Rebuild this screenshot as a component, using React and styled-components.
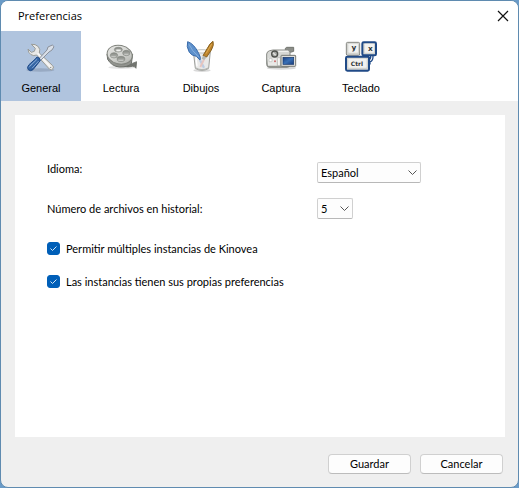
import { useState } from "react";
import styled, { createGlobalStyle } from "styled-components";

const GlobalStyle = createGlobalStyle`
  * {
    box-sizing: border-box;
  }

  body {
    margin: 0;
    background: #6a9bc8;
    color: #000000;
    font-family: Lato, "Liberation Sans", Arial, sans-serif;
    font-size: 11px;
    line-height: 14px;
  }
`;

const Desktop = styled.div`
  display: flex;
  min-height: 100vh;
`;

const Dialog = styled.form`
  display: flex;
  flex-direction: column;
  flex: 1;
  overflow: hidden;
  background: #efefef;
  border: 1px solid #5f8bb0;
  border-radius: 8px;
`;

const TitleBar = styled.header`
  display: flex;
  align-items: center;
  justify-content: space-between;
  height: 30px;
  padding: 0 7px 0 17px;
  background: #ffffff;
`;

const Title = styled.h1`
  margin: 0;
  font-family: "Open Sans", "Noto Sans", sans-serif;
  font-size: 11px;
  font-weight: normal;
`;

const CloseButton = styled.button`
  display: flex;
  padding: 2px;
  background: none;
  border: none;
`;

const Tabs = styled.nav`
  display: flex;
  background: #ffffff;
`;

const Tab = styled.button`
  display: flex;
  flex-direction: column;
  align-items: center;
  gap: 8px;
  width: 80px;
  height: 70px;
  padding: 10px 0 0;
  background: ${(props) => (props.$active ? "#b0c4de" : "#ffffff")};
  border: none;
  color: inherit;
  font-family: "Liberation Sans", Arial, sans-serif;
  font-size: 11px;
  line-height: 14px;
`;

const Icon = styled.svg`
  display: block;
  width: 32px;
  height: 32px;
`;

const Panel = styled.main`
  display: flex;
  flex-direction: column;
  flex: 1;
  margin: 14px 13px 0 14px;
  padding: 47px 32px;
  background: #ffffff;
`;

const Fields = styled.div`
  display: flex;
  flex-direction: column;
  gap: 15px;
  margin-bottom: 13px;
`;

const Field = styled.div`
  display: grid;
  grid-template-columns: 270px 1fr;
  align-items: ${(props) => props.$align || "center"};
`;

const SelectBox = styled.div`
  position: relative;
  width: ${(props) => props.$width};

  svg {
    position: absolute;
    top: 8px;
    right: 4px;
    pointer-events: none;
  }
`;

const Select = styled.select`
  appearance: none;
  display: block;
  width: 100%;
  height: 21px;
  padding: 0 16px 0 3px;
  background: #fdfdfd;
  border: 1px solid #d0d0d0;
  border-bottom-color: #b8b8b8;
  border-radius: 2px;
  color: inherit;
  font: inherit;
`;

const CheckLabel = styled.label`
  display: flex;
  align-items: center;
  gap: 6px;
  height: 33px;
`;

const CheckBox = styled.span`
  display: grid;

  input,
  svg {
    grid-area: 1 / 1;
  }

  svg {
    visibility: ${(props) => (props.$checked ? "visible" : "hidden")};
    pointer-events: none;
  }

  input {
    appearance: none;
    width: 13px;
    height: 13px;
    margin: 0;
    background: ${(props) => (props.$checked ? "#005fb8" : "#ffffff")};
    border: 1px solid ${(props) => (props.$checked ? "#005fb8" : "#868686")};
    border-radius: 3px;
  }
`;

const Footer = styled.footer`
  display: flex;
  justify-content: flex-end;
  gap: 9px;
  padding: 17px 15px 13px;
`;

const Button = styled.button`
  width: 83px;
  height: 20px;
  padding: 0;
  background: #fdfdfd;
  border: 1px solid #d0d0d0;
  border-bottom-color: #bcbcbc;
  border-radius: 4px;
  color: inherit;
  font: inherit;
`;

const GeneralIcon = () => (
  <Icon viewBox="0 0 96 96" aria-hidden="true">
    <defs>
      <linearGradient id="handle" x1="0" y1="0" x2="1" y2="1">
        <stop offset="0" stopColor="#7fa5d4" />
        <stop offset="0.5" stopColor="#3465a4" />
        <stop offset="1" stopColor="#204a87" />
      </linearGradient>
    </defs>
    <ellipse cx="46" cy="87" rx="42" ry="5" fill="#7f8fa8" opacity="0.5" />
    <path
      d="M19 10 L31 22 L28 31 L19 34 L9 24 Q9 35 18 41 Q26 46 35 42 L73 84 Q79 90 84 83 Q88 78 82 73 L43 36 Q47 25 40 17 Q31 8 19 10 Z"
      fill="#e9e9e7"
      stroke="#9a9c98"
      strokeWidth="3"
    />
    <path d="M38 37 L77 78" stroke="#f8f8f8" strokeWidth="4" />
    <circle cx="77" cy="79" r="2" fill="#888a85" />
    <path
      d="M66 27 L69 18 L82 12 L87 17 L81 27 L72 33 L47 58 L42 53 Z"
      fill="#d9dfe8"
      stroke="#8b919b"
      strokeWidth="3"
    />
    <path
      d="M36 48 Q44 49 46 58 L40 66 L24 86 Q16 92 10 86 Q4 80 12 71 L30 55 Z"
      fill="url(#handle)"
      stroke="#204a87"
      strokeWidth="3"
    />
    <path
      d="M35 56 L14 76 M40 61 L22 81"
      stroke="#86a9d6"
      strokeWidth="3"
      strokeLinecap="round"
    />
  </Icon>
);

const PlaybackIcon = () => (
  <Icon viewBox="0 0 96 96" aria-hidden="true">
    <defs>
      <linearGradient id="reel" x1="0" y1="0" x2="1" y2="1">
        <stop offset="0" stopColor="#e8e8e6" />
        <stop offset="0.55" stopColor="#d2d3cf" />
        <stop offset="1" stopColor="#a8aaa5" />
      </linearGradient>
      <linearGradient id="hole" x1="0" y1="0" x2="0" y2="1">
        <stop offset="0" stopColor="#858882" />
        <stop offset="1" stopColor="#b9bbb7" />
      </linearGradient>
    </defs>
    <ellipse cx="50" cy="79" rx="40" ry="5" fill="#000000" opacity="0.1" />
    <path
      d="M63 68 Q78 72 87 65 L95 62 L93 82 Q90 76 83 76 Q70 79 55 77 Z"
      fill="#737570"
      stroke="#5d605b"
      strokeWidth="2"
    />
    <path
      d="M6 39 L8 55 Q20 76 43 78 Q67 79 79 68 L83 40 Z"
      fill="#91938e"
      stroke="#6d706b"
      strokeWidth="3"
    />
    <ellipse
      cx="44"
      cy="41"
      rx="38"
      ry="28"
      transform="rotate(12 44 41)"
      fill="url(#reel)"
      stroke="#80837d"
      strokeWidth="3"
    />
    <g fill="url(#hole)" stroke="#858882" strokeWidth="2">
      <ellipse cx="40" cy="26" rx="12" ry="7" />
      <ellipse cx="27" cy="43" rx="11" ry="8" />
      <ellipse cx="64" cy="36" rx="11" ry="8" />
      <ellipse cx="48" cy="54" rx="12" ry="8" />
    </g>
    <path d="M34 28 H47" stroke="#f2f2f0" strokeWidth="5" />
    <path d="M19 47 H32 M58 40 H70 M40 58 H55" stroke="#c9cac7" strokeWidth="3" />
  </Icon>
);

const DrawingsIcon = () => (
  <Icon viewBox="0 0 96 96" aria-hidden="true">
    <ellipse cx="51" cy="88" rx="26" ry="5" fill="#000000" opacity="0.15" />
    <path
      d="M25 31 L31 82 Q51 94 71 82 L76 31 Z"
      fill="#e9e9e8"
      stroke="#9c9e9a"
      strokeWidth="3"
    />
    <ellipse cx="51" cy="31" rx="25" ry="5" fill="#fafafa" stroke="#a8aaa6" strokeWidth="2" />
    <path d="M43 53 L57 80" stroke="#bccce2" strokeWidth="7" />
    <path d="M57 55 L46 78" stroke="#e6c5bf" strokeWidth="6" />
    <path
      d="M8 2 Q3 16 13 34 Q20 44 34 46 L45 57 Q49 51 41 37 Q27 8 8 2 Z"
      fill="#5e91cc"
      stroke="#3c6dab"
      strokeWidth="3"
    />
    <path d="M12 10 Q20 29 41 48" fill="none" stroke="#86afdd" strokeWidth="3" />
    <path
      d="M84 1 Q88 12 79 27 L65 48 L54 44 L67 22 Q75 6 84 1 Z"
      fill="#bd842d"
      stroke="#87601f"
      strokeWidth="3"
    />
    <path d="M80 9 L63 38" stroke="#dfac50" strokeWidth="3" />
    <path d="M54 44 L65 49 L58 57 L50 53 Z" fill="#b6b8b3" />
    <path d="M33 50 L36 76" stroke="#ffffff" strokeWidth="4" />
    <path d="M32 81 Q51 91 70 81" fill="none" stroke="#b4b6b2" strokeWidth="4" />
  </Icon>
);

const CaptureIcon = () => (
  <Icon viewBox="0 0 96 96" aria-hidden="true">
    <defs>
      <linearGradient id="camera" x1="0" y1="0" x2="0" y2="1">
        <stop offset="0" stopColor="#d4d5d2" />
        <stop offset="0.5" stopColor="#d8d9d6" />
        <stop offset="1" stopColor="#8c8f88" />
      </linearGradient>
      <linearGradient id="screen" x1="0" y1="0" x2="1" y2="1">
        <stop offset="0" stopColor="#183f82" />
        <stop offset="0.5" stopColor="#3a70b5" />
        <stop offset="1" stopColor="#173c7c" />
      </linearGradient>
    </defs>
    <ellipse cx="49" cy="81" rx="44" ry="5" fill="#000000" opacity="0.15" />
    <path
      d="M61 22 L65 19 H86 V31 L76 34 H61 Z"
      fill="#8c8e89"
      stroke="#72756f"
      strokeWidth="3"
    />
    <path
      d="M14 29 L24 27 H69 Q75 28 75 35 V73 Q74 78 67 79 H13 Q5 78 5 70 V39 Q6 31 14 29 Z"
      fill="url(#camera)"
      stroke="#888a85"
      strokeWidth="3"
    />
    <path d="M40 31 H70" stroke="#f0f0ee" strokeWidth="4" />
    <circle cx="29" cy="39" r="9" fill="#a5a7a3" stroke="#50534e" strokeWidth="4" />
    <path d="M24 35 L32 43" stroke="#e4e4e1" strokeWidth="4" />
    <path d="M9 51 H36 V74 H9 Z" fill="#e9e9e7" />
    <path d="M12 53 H21 V62 H12 Z" fill="#ffffff" stroke="#b9bbb7" strokeWidth="2" />
    <circle cx="30" cy="61" r="3" fill="#c96c6c" />
    <path d="M37 50 H46 V74 H37 Z" fill="#f5f5f3" stroke="#b0b2ae" strokeWidth="2" />
    <rect
      x="48"
      y="43"
      width="44"
      height="33"
      rx="2"
      fill="#dededb"
      stroke="#777a74"
      strokeWidth="3"
    />
    <rect
      x="54"
      y="49"
      width="32"
      height="21"
      fill="url(#screen)"
      stroke="#17366c"
      strokeWidth="2"
    />
  </Icon>
);

const KeyboardIcon = () => (
  <Icon viewBox="0 0 96 96" aria-hidden="true">
    <g fill="#d3d4d0">
      <rect x="4" y="4" width="40" height="39" rx="4" stroke="#888a85" strokeWidth="3" />
      <path
        d="M84 43 Q85 61 75 62 L75 67 L64 58 L75 49 V54 Q78 51 77 43 Z"
        fill="#ffffff"
        stroke="#204a87"
        strokeWidth="4"
      />
      <rect x="52" y="4" width="41" height="39" rx="4" stroke="#204a87" strokeWidth="6" />
      <rect x="3" y="47" width="69" height="42" rx="4" stroke="#204a87" strokeWidth="6" />
    </g>
    <g fill="#f2f2f0">
      <rect x="10" y="8" width="29" height="27" rx="2" />
      <rect x="59" y="8" width="28" height="27" rx="2" />
      <rect x="10" y="53" width="55" height="27" rx="2" />
    </g>
    <g
      fill="#2e3436"
      fontFamily="DejaVu Sans, sans-serif"
      fontWeight="bold"
      fontSize="22"
      textAnchor="middle"
    >
      <text x="27" y="27">y</text>
      <text x="76" y="29">x</text>
      <text x="36" y="74" fontSize="18">
        Ctrl
      </text>
    </g>
  </Icon>
);

const Chevron = () => (
  <svg width="9" height="6" viewBox="0 0 9 6" aria-hidden="true">
    <path d="M0.5 0.5 L4.5 4.5 L8.5 0.5" fill="none" stroke="#555555" />
  </svg>
);

const tabs = [
  { name: "General", icon: GeneralIcon },
  { name: "Lectura", icon: PlaybackIcon },
  { name: "Dibujos", icon: DrawingsIcon },
  { name: "Captura", icon: CaptureIcon },
  { name: "Teclado", icon: KeyboardIcon },
];

const SelectField = ({ id, label, width, align, value, options, onChange }) => (
  <Field $align={align}>
    <label htmlFor={id}>{label}</label>
    <SelectBox $width={width}>
      <Select id={id} value={value} onChange={onChange}>
        {options.map((option) => (
          <option key={option}>{option}</option>
        ))}
      </Select>
      <Chevron />
    </SelectBox>
  </Field>
);

const CheckField = ({ label, checked, onChange }) => (
  <CheckLabel>
    <CheckBox $checked={checked}>
      <input type="checkbox" checked={checked} onChange={onChange} />
      <svg width="13" height="13" viewBox="0 0 13 13" aria-hidden="true">
        <path d="M3.5 6.5 L5.5 8.5 L9.5 4.5" fill="none" stroke="#d5e6f5" />
      </svg>
    </CheckBox>
    {label}
  </CheckLabel>
);

const App = () => {
  const [active, setActive] = useState("General");
  const [state, setState] = useState({
    language: "Español",
    recents: "5",
    multiple: true,
    ownPreferences: true,
  });

  const { language, recents, multiple, ownPreferences } = state;

  const handleSelect = (name) => (e) =>
    setState({ ...state, [name]: e.target.value });

  const handleCheck = (name) => (e) =>
    setState({ ...state, [name]: e.target.checked });

  return (
    <Desktop>
      <GlobalStyle />
      <Dialog onSubmit={(e) => e.preventDefault()}>
        <TitleBar>
          <Title>Preferencias</Title>
          <CloseButton type="button" aria-label="Cerrar">
            <svg width="12" height="12" viewBox="0 0 12 12" aria-hidden="true">
              <path d="M1 1 L11 11 M11 1 L1 11" stroke="#111111" strokeWidth="1.2" />
            </svg>
          </CloseButton>
        </TitleBar>
        <Tabs>
          {tabs.map(({ name, icon: TabIcon }) => (
            <Tab
              key={name}
              type="button"
              $active={name === active}
              onClick={() => setActive(name)}
            >
              <TabIcon />
              {name}
            </Tab>
          ))}
        </Tabs>
        <Panel>
          <Fields>
            <SelectField
              id="language"
              label="Idioma:"
              width="104px"
              align="start"
              value={language}
              options={["Español", "English", "Français"]}
              onChange={handleSelect("language")}
            />
            <SelectField
              id="recents"
              label="Número de archivos en historial:"
              width="36px"
              value={recents}
              options={["5", "10", "15"]}
              onChange={handleSelect("recents")}
            />
          </Fields>
          <CheckField
            label="Permitir múltiples instancias de Kinovea"
            checked={multiple}
            onChange={handleCheck("multiple")}
          />
          <CheckField
            label="Las instancias tienen sus propias preferencias"
            checked={ownPreferences}
            onChange={handleCheck("ownPreferences")}
          />
        </Panel>
        <Footer>
          <Button type="submit">Guardar</Button>
          <Button type="button">Cancelar</Button>
        </Footer>
      </Dialog>
    </Desktop>
  );
};

export default App;
